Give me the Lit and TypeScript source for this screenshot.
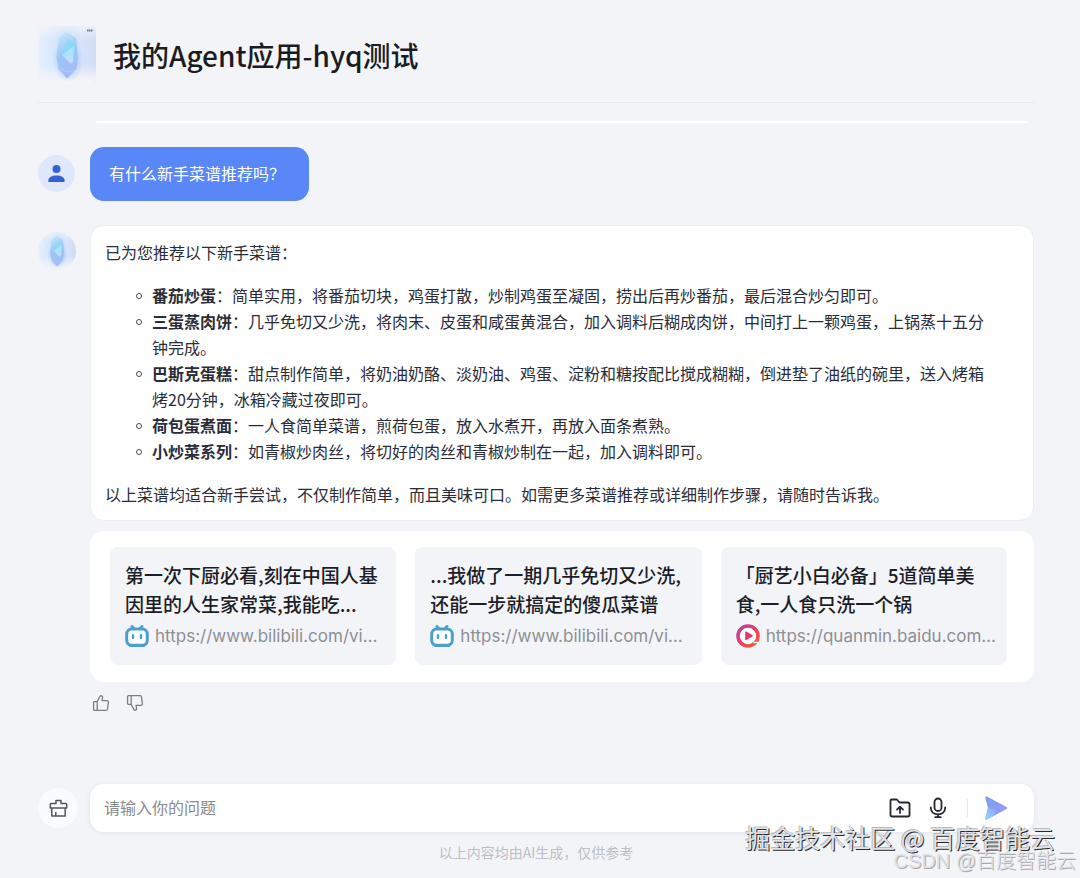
import { LitElement, html, css, svg } from "lit";
import { customElement, property } from "lit/decorators.js";

interface Dish {
  name: string;
  text: string;
}

interface Source {
  title: string;
  url: string;
  icon: "bili" | "quanmin";
}

const dishes: Dish[] = [
  { name: "番茄炒蛋", text: "简单实用，将番茄切块，鸡蛋打散，炒制鸡蛋至凝固，捞出后再炒番茄，最后混合炒匀即可。" },
  { name: "三蛋蒸肉饼", text: "几乎免切又少洗，将肉末、皮蛋和咸蛋黄混合，加入调料后糊成肉饼，中间打上一颗鸡蛋，上锅蒸十五分钟完成。" },
  { name: "巴斯克蛋糕", text: "甜点制作简单，将奶油奶酪、淡奶油、鸡蛋、淀粉和糖按配比搅成糊糊，倒进垫了油纸的碗里，送入烤箱烤20分钟，冰箱冷藏过夜即可。" },
  { name: "荷包蛋煮面", text: "一人食简单菜谱，煎荷包蛋，放入水煮开，再放入面条煮熟。" },
  { name: "小炒菜系列", text: "如青椒炒肉丝，将切好的肉丝和青椒炒制在一起，加入调料即可。" },
];

const sources: Source[] = [
  { title: "第一次下厨必看,刻在中国人基因里的人生家常菜,我能吃...", url: "https://www.bilibili.com/vi…", icon: "bili" },
  { title: "...我做了一期几乎免切又少洗,还能一步就搞定的傻瓜菜谱", url: "https://www.bilibili.com/vi…", icon: "bili" },
  { title: "「厨艺小白必备」5道简单美食,一人食只洗一个锅", url: "https://quanmin.baidu.com…", icon: "quanmin" },
];

const biliIcon = svg`
  <path d="M7 2.500 9 5M17 2.500 15 5" stroke="#4a9fd0" stroke-width="3" stroke-linecap="round"/>
  <rect x="1.700" y="5" width="20.600" height="16.300" rx="5" fill="#fff" stroke="#4a9fd0" stroke-width="3"/>
  <path d="M5.500 21.500h13" stroke="#4a9fd0" stroke-width="3" stroke-linecap="round"/>
  <path d="M8 11.300v2.600M16 11.300v2.600" stroke="#4a9fd0" stroke-width="2.400" stroke-linecap="round"/>`;

const quanminIcon = svg`
  <defs>
    <linearGradient id="ring" x1="0" y1="0" x2="1" y2="1">
      <stop offset="0" stop-color="#b63fae"/>
      <stop offset=".5" stop-color="#ea3f5e"/>
      <stop offset="1" stop-color="#f2643a"/>
    </linearGradient>
  </defs>
  <circle cx="12" cy="12" r="10" fill="#fff" stroke="url(#ring)" stroke-width="3.600"/>
  <path d="M17.500 18.500h5" stroke="#fff" stroke-width="1.300"/>
  <path d="M9.200 8.300q0-1.200 1.100-.7l6 3.500q1 .7 0 1.500l-6 3.500q-1.100.5-1.100-.7z" fill="#e6395f"/>`;

@customElement("crystal-avatar")
export class CrystalAvatar extends LitElement {
  @property({ type: Boolean }) round = false;

  static styles = css`
    :host { display: block; }
    .art { display: block; width: 100%; height: auto; overflow: visible; }
  `;

  render() {
    return html`<svg class="art" viewBox="0 0 58 58" aria-hidden="true">
      <defs>
        <linearGradient id="side" x1="0" y1="0" x2="1" y2="0">
          <stop offset="0" stop-color="#e6f0fc"/>
          <stop offset=".3" stop-color="#d6e7fc"/>
          <stop offset=".55" stop-color="#bfdffa"/>
          <stop offset=".75" stop-color="#d9e2fb"/>
          <stop offset="1" stop-color="#d0dcf4"/>
        </linearGradient>
        <linearGradient id="fade" x1="0" y1="0" x2="0" y2="1">
          <stop offset="0" stop-color="#f3f5f9" stop-opacity=".75"/>
          <stop offset=".25" stop-color="#f3f5f9" stop-opacity="0"/>
          <stop offset=".65" stop-color="#f3f5f9" stop-opacity="0"/>
          <stop offset=".95" stop-color="#f3f5f9" stop-opacity="1"/>
        </linearGradient>
        <linearGradient id="gem" x1=".3" y1="0" x2=".6" y2="1">
          <stop offset="0" stop-color="#c6e6fa"/>
          <stop offset=".45" stop-color="#9cc6f6"/>
          <stop offset="1" stop-color="#a5b9f7"/>
        </linearGradient>
        <radialGradient id="glow">
          <stop offset="0" stop-color="#7ba5f5" stop-opacity=".85"/>
          <stop offset="1" stop-color="#9dc1fa" stop-opacity="0"/>
        </radialGradient>
        <clipPath id="shape">
          <rect width="58" height="58" rx=${this.round ? 29 : 5} />
        </clipPath>
      </defs>
      <g clip-path="url(#shape)">
        <rect width="58" height="58" fill="url(#side)"/>
        <rect width="58" height="58" fill="url(#fade)"/>
      </g>
      <ellipse cx="30" cy="34" rx="16" ry="22" fill="url(#glow)"/>
      <path d="M28 6 38 12 40 33 38 44 29 53 20 43 18 31 20 12z" fill="url(#gem)"/>
      <path d="M20 12 18 31 20 43 29 53 38 44" fill="none" stroke="#d6eefd" stroke-width="1" opacity=".6"/>
      <path d="M30 13 37 19 36 34 24 29z" fill="#84dcf8" opacity=".75"/>
      <path d="M24 29 36 20 35 34z" fill="#b4e6fb" opacity=".8"/>
      <path d="M24 29 36 34 33 38z" fill="#d9effe" opacity=".6"/>
      <path d="M21 42 29 46 38 44" fill="none" stroke="#d8ecfe" stroke-width=".8" opacity=".4"/>
      ${this.round ? null : svg`<path d="M49 4.500h5.500" stroke="#6c7f8b" stroke-width="1.800" stroke-dasharray="1.600 .4"/>`}
    </svg>`;
  }
}

@customElement("source-card")
export class SourceCard extends LitElement {
  @property({ attribute: false }) source!: Source;

  static styles = css`
    :host { display: block; min-width: 0; }
    .card {
      display: grid;
      gap: 6px;
      padding: 13px 15px 17px;
      border-radius: 8px;
      background: #f3f4f8;
      color: inherit;
      text-decoration: none;
    }
    .title { font-size: 19px; line-height: 29px; font-weight: 500; color: #1b1d27; }
    .origin { display: flex; align-items: center; gap: 6px; color: #8d8f94; }
    .icon { flex: none; width: 24px; height: 24px; }
    .url {
      min-width: 0;
      overflow: hidden;
      white-space: nowrap;
      font-family: Inter, "Noto Sans CJK SC", sans-serif;
      font-size: 17px;
      line-height: 24px;
    }
  `;

  render() {
    return html`<a class="card" href="#">
      <span class="title">${this.source.title}</span>
      <span class="origin">
        <svg class="icon" viewBox="0 0 24 24" fill="none" aria-hidden="true">
          ${this.source.icon === "bili" ? biliIcon : quanminIcon}
        </svg>
        <span class="url">${this.source.url}</span>
      </span>
    </a>`;
  }
}

@customElement("app-root")
export class AppRoot extends LitElement {
  static styles = css`
    :host {
      display: block;
      background: #f3f4f8;
      color: #2a2c37;
      font-family: "Noto Sans CJK SC", sans-serif;
      font-size: 16px;
      line-height: 26px;
    }
    *, *::before { box-sizing: border-box; }
    .page {
      position: relative;
      display: flex;
      flex-direction: column;
      min-height: 100vh;
      padding: 26px 46px 13px 38px;
      overflow: hidden;
    }
    .header {
      display: flex;
      align-items: center;
      gap: 17px;
      padding-bottom: 18px;
      border-bottom: 1px solid #e8eaee;
    }
    .logo { width: 58px; }
    .name {
      margin: 0;
      font-size: 28px;
      line-height: 36px;
      font-weight: 500;
      color: #1a1c22;
    }
    .previous { height: 2px; margin: 18px 6px 24px 58px; border-radius: 2px; background: #fff; }
    .row { display: grid; grid-template-columns: 38px minmax(0, 1fr); column-gap: 14px; }
    .user { align-items: center; margin-bottom: 24px; }
    .person { display: block; width: 38px; height: 38px; }
    .bubble {
      justify-self: start;
      padding: 13px 24px 15px 19px;
      border-radius: 14px;
      background: #5a87f8;
      color: #fff;
    }
    .bot { margin-top: 7px; }
    .reply { display: grid; gap: 10px; min-width: 0; }
    .answer {
      padding: 13px 34px 13px 14px;
      border: 1px solid #eceef1;
      border-radius: 14px;
      background: #fff;
    }
    .line { margin: 0; }
    .dishes { margin: 17px 0; padding: 0 0 0 31px; list-style: none; }
    .item { display: flex; gap: 10px; }
    .item::before {
      content: "";
      flex: none;
      width: 6px;
      height: 6px;
      margin-top: 11px;
      border: 1px solid #4a4c55;
      border-radius: 50%;
    }
    .dish { font-weight: 700; }
    .sources {
      display: grid;
      grid-template-columns: repeat(3, minmax(0, 1fr));
      gap: 19px;
      padding: 16px 27px 17px 20px;
      border-radius: 14px;
      background: #fff;
    }
    .feedback { display: flex; gap: 16px; margin: 2px 0 0 2px; }
    .plain { display: block; padding: 0; border: 0; background: none; cursor: pointer; }
    .thumb { display: block; width: 18px; height: 18px; }
    .spacer { flex: 1; min-height: 24px; }
    .composer { align-items: center; }
    .brush {
      display: grid;
      place-items: center;
      width: 40px;
      height: 40px;
      padding: 0;
      border: 0;
      border-radius: 50%;
      background: #fafbfc;
    }
    .glyph { display: block; width: 24px; height: 24px; }
    .box {
      display: flex;
      align-items: center;
      height: 48px;
      padding: 0 26px 0 14px;
      border-radius: 14px;
      background: #fff;
      box-shadow: 0 1px 5px rgba(40, 50, 80, 0.08);
    }
    .field {
      flex: 1;
      min-width: 0;
      padding: 0 0 2px;
      border: 0;
      outline: 0;
      background: none;
      font: inherit;
      color: inherit;
    }
    .field::placeholder { color: #8a8b8f; opacity: 1; }
    .tools { display: flex; align-items: center; gap: 14px; }
    .rule { width: 1px; height: 18px; margin: 0 2px 0 3px; background: #e6e8ec; }
    .note { margin: 7px 0 0; text-align: center; font-size: 14px; color: #bcbfc5; }
    .stamp { position: absolute; white-space: nowrap; pointer-events: none; }
    .community {
      right: 25px;
      bottom: 25px;
      font-size: 25px;
      line-height: 32px;
      color: #e2e3e5;
      text-shadow: 1px 1px 0 #26282c, -1px -1px 0 #b9bbbf;
    }
    .csdn {
      right: 4px;
      bottom: 3px;
      font-family: "Liberation Sans", "Noto Sans CJK SC", sans-serif;
      font-size: 20px;
      line-height: 28px;
      font-weight: 300;
      color: #e0e1e4;
      text-shadow: 1px 1px 0 #a8aaae;
    }
  `;

  render() {
    return html`<main class="page">
      <header class="header">
        <crystal-avatar class="logo"></crystal-avatar>
        <h1 class="name">我的Agent应用-hyq测试</h1>
      </header>
      <div class="previous"></div>

      <section class="row user">
        <svg class="person" viewBox="0 0 38 38" aria-hidden="true">
          <circle cx="18.500" cy="18.500" r="18.500" fill="#dfe7fb"/>
          <circle cx="18.500" cy="14" r="4" fill="#3563d6"/>
          <path d="M10.300 27v-1.200c0-3.400 3.800-5.200 8.200-5.200s8.200 1.800 8.200 5.200v.2q0 1-1 1z" fill="#3563d6"/>
        </svg>
        <div class="bubble">有什么新手菜谱推荐吗？</div>
      </section>

      <section class="row">
        <crystal-avatar class="bot" round></crystal-avatar>
        <div class="reply">
          <article class="answer">
            <p class="line">已为您推荐以下新手菜谱：</p>
            <ul class="dishes">
              ${dishes.map(
                (d) => html`<li class="item"><p class="line"><strong class="dish">${d.name}</strong>：${d.text}</p></li>`,
              )}
            </ul>
            <p class="line">以上菜谱均适合新手尝试，不仅制作简单，而且美味可口。如需更多菜谱推荐或详细制作步骤，请随时告诉我。</p>
          </article>
          <div class="sources">
            ${sources.map((s) => html`<source-card .source=${s}></source-card>`)}
          </div>
          <div class="feedback">
            <button class="plain" type="button" aria-label="赞">
              <svg class="thumb" viewBox="0 0 18 18" fill="none" stroke="#7b7d82" stroke-width="1.300" stroke-linejoin="round">
                <path d="M2.600 7.600h2.600v8.800H2.600a1 1 0 0 1-1-1V8.600a1 1 0 0 1 1-1zM5.200 7.600 8 2.300c.5-1 2.900-.5 2.600 1.200L10 6.600h4.900a1.500 1.500 0 0 1 1.500 1.700l-.9 6.700a1.600 1.600 0 0 1-1.600 1.400H5.200"/>
              </svg>
            </button>
            <button class="plain" type="button" aria-label="踩">
              <svg class="thumb" viewBox="0 0 18 18" fill="none" stroke="#7b7d82" stroke-width="1.300" stroke-linejoin="round">
                <path d="M2.600 10.400h2.600V1.600H2.600a1 1 0 0 0-1 1v6.800a1 1 0 0 0 1 1zM5.200 10.400 8 15.700c.5 1 2.900.5 2.600-1.200L10 11.400h4.900a1.500 1.500 0 0 0 1.500-1.700L15.500 3a1.600 1.600 0 0 0-1.600-1.400H5.200"/>
              </svg>
            </button>
          </div>
        </div>
      </section>

      <div class="spacer"></div>

      <form class="row composer" @submit=${(e: Event) => e.preventDefault()}>
        <button class="brush" type="button" aria-label="清空">
          <svg class="glyph" viewBox="0 0 24 24" fill="none" stroke="#53565b" stroke-width="1.500" stroke-linejoin="round">
            <path d="M10 7.500V4.500h5v3h4.700a1 1 0 0 1 1 1V12H4.300V8.500a1 1 0 0 1 1-1zM5.800 12v8h13.400v-8M9.800 20v-4"/>
          </svg>
        </button>
        <div class="box">
          <input class="field" type="text" aria-label="请输入你的问题" placeholder="请输入你的问题" />
          <div class="tools">
            <button class="plain" type="button" aria-label="上传文件">
              <svg class="glyph" viewBox="0 0 24 24" fill="none" stroke="#25272b" stroke-width="1.800" stroke-linejoin="round" stroke-linecap="round">
                <path d="M3.500 3.500h5.300l2.700 3h8.200a1.800 1.800 0 0 1 1.800 1.800v10.400a1.800 1.800 0 0 1-1.800 1.800H4.300a1.800 1.800 0 0 1-1.800-1.800V4.500a1 1 0 0 1 1-1zM12 17v-6M9 13.600l3-3 3 3"/>
              </svg>
            </button>
            <button class="plain" type="button" aria-label="语音输入">
              <svg class="glyph" viewBox="0 0 24 24" fill="none" stroke="#25272b" stroke-width="1.800" stroke-linecap="round">
                <rect x="8.500" y="2.500" width="7" height="12.500" rx="3.500"/>
                <path d="M4.800 11.500c0 4.200 3.200 6.800 7.200 6.800s7.200-2.600 7.200-6.800M12 18.300v2.700M9.300 21.200h5.400"/>
              </svg>
            </button>
            <span class="rule"></span>
            <button class="plain" type="submit" aria-label="发送">
              <svg class="glyph" viewBox="0 0 24 24">
                <defs>
                  <linearGradient id="wing" x1="0" y1="0" x2="1" y2="1">
                    <stop offset="0" stop-color="#7aa2f4"/>
                    <stop offset="1" stop-color="#9a97f5"/>
                  </linearGradient>
                  <linearGradient id="tail" x1="0" y1="1" x2="1" y2="0">
                    <stop offset="0" stop-color="#9ad6fb"/>
                    <stop offset="1" stop-color="#8aa6f5"/>
                  </linearGradient>
                </defs>
                <path d="M1.300 1.800Q.9-.3 3 .6L22.400 11q1.400 1 0 2L3 23.400q-2.100.9-1.700-1.200L4 12z" fill="url(#wing)"/>
                <path d="M4 12 12.500 14 9 20.200 3 23.400q-2.100.9-1.700-1.200z" fill="url(#tail)"/>
              </svg>
            </button>
          </div>
        </div>
      </form>
      <p class="note">以上内容均由AI生成，仅供参考</p>
      <div class="stamp community">掘金技术社区 @ 百度智能云</div>
      <div class="stamp csdn">CSDN @百度智能云</div>
    </main>`;
  }
}
